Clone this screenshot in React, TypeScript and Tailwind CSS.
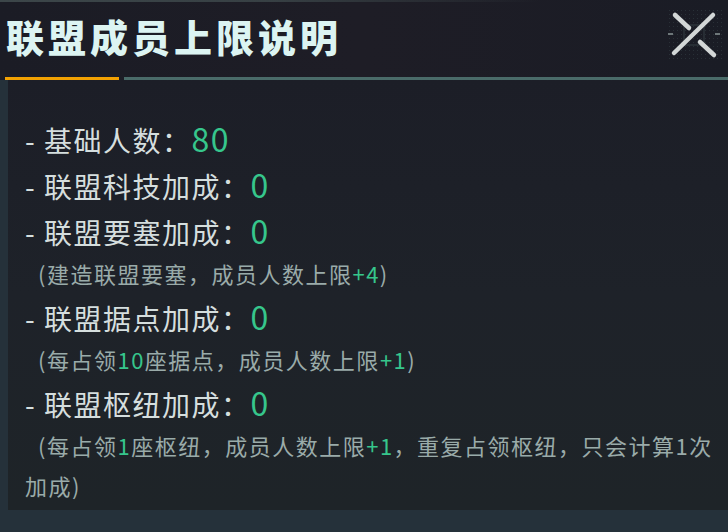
import React from "react";

const FONT = "font-['Noto_Sans_CJK_SC','Noto_Sans',sans-serif]";

function CloseIcon() {
  return (
    <svg width="60" height="56" viewBox="0 0 60 56" className="self-start mt-[6px]">
      {/* faint grid behind the cross */}
      <defs>
        <pattern id="dots" width="4" height="4" patternUnits="userSpaceOnUse">
          <rect width="1" height="1" fill="#2c353b" />
        </pattern>
      </defs>
      <rect x="2" y="2" width="56" height="52" fill="url(#dots)" opacity="0.8" />
      <rect x="19" y="19" width="20" height="20" fill="none" stroke="#343e44" strokeWidth="1" />
      <line x1="3" y1="28" x2="8" y2="28" stroke="#8a9496" strokeWidth="1.5" />
      <line x1="50" y1="28" x2="55" y2="28" stroke="#8a9496" strokeWidth="1.5" />
      <g stroke="#d3d7d7" strokeWidth="4.5" strokeLinecap="round">
        <line x1="48" y1="9" x2="9" y2="47" />
        <line x1="10" y1="9" x2="24" y2="22" />
        <line x1="35" y1="36" x2="49" y2="49" />
      </g>
    </svg>
  );
}

function MainLine({ label, value }: { label: string; value: string }) {
  return (
    <div className="h-[46px] leading-[46px] text-[28px] tracking-[1.5px] text-[#d5dede] whitespace-nowrap">
      - {label}：<span className="text-[32px] text-[#36c68c]">{value}</span>
    </div>
  );
}

function SubLine({ children }: { children: React.ReactNode }) {
  return (
    <p className="text-[22px] leading-[40px] tracking-[1.5px] indent-[13px] text-[#9aaba9]">
      {children}
    </p>
  );
}

const G = ({ children }: { children: React.ReactNode }) => (
  <span className="text-[#36c68c]">{children}</span>
);

export default function App() {
  return (
    <div className={`w-[728px] h-[532px] overflow-hidden flex flex-col bg-[#25313a] ${FONT}`}>
      {/* HEADER */}
      <header className="relative h-[80px] shrink-0 flex flex-col bg-gradient-to-r from-[#1b1c25] via-[#1e1d26] to-[#1a1c25]">
        <div className="absolute top-0 left-0 w-[540px] h-[2px] bg-gradient-to-r from-[#3c4649] via-[#374044] to-transparent" />
        <div className="h-[72px] flex items-center justify-between pl-[6px] pr-[3px]">
          <h1 className="text-[38px] font-black tracking-[4px] text-[#dcf4f2] leading-none">
            联盟成员上限说明
          </h1>
          <CloseIcon />
        </div>
        <div className="mt-[5px] h-[3px] flex gap-[5px] pl-[5px]">
          <div className="w-[114px] bg-[#f2a102]" />
          <div className="flex-1 bg-[#4a6b69]" />
        </div>
      </header>

      {/* BODY */}
      <div className="flex-1 flex pl-[8px] pb-[22px]">
        <div className="flex-1 bg-gradient-to-b from-[#1c1e27] via-[#1e2229] to-[#1e2428] pl-[17px] pr-[12px] pt-[35px]">
          <MainLine label="基础人数" value="80" />
          <MainLine label="联盟科技加成" value="0" />
          <MainLine label="联盟要塞加成" value="0" />
          <SubLine>
            (建造联盟要塞，成员人数上限<G>+4</G>)
          </SubLine>
          <MainLine label="联盟据点加成" value="0" />
          <SubLine>
            (每占领<G>10</G>座据点，成员人数上限<G>+1</G>)
          </SubLine>
          <MainLine label="联盟枢纽加成" value="0" />
          <SubLine>
            (每占领<G>1</G>座枢纽，成员人数上限<G>+1</G>，重复占领枢纽，只会计算1次加成)
          </SubLine>
        </div>
      </div>
    </div>
  );
}
